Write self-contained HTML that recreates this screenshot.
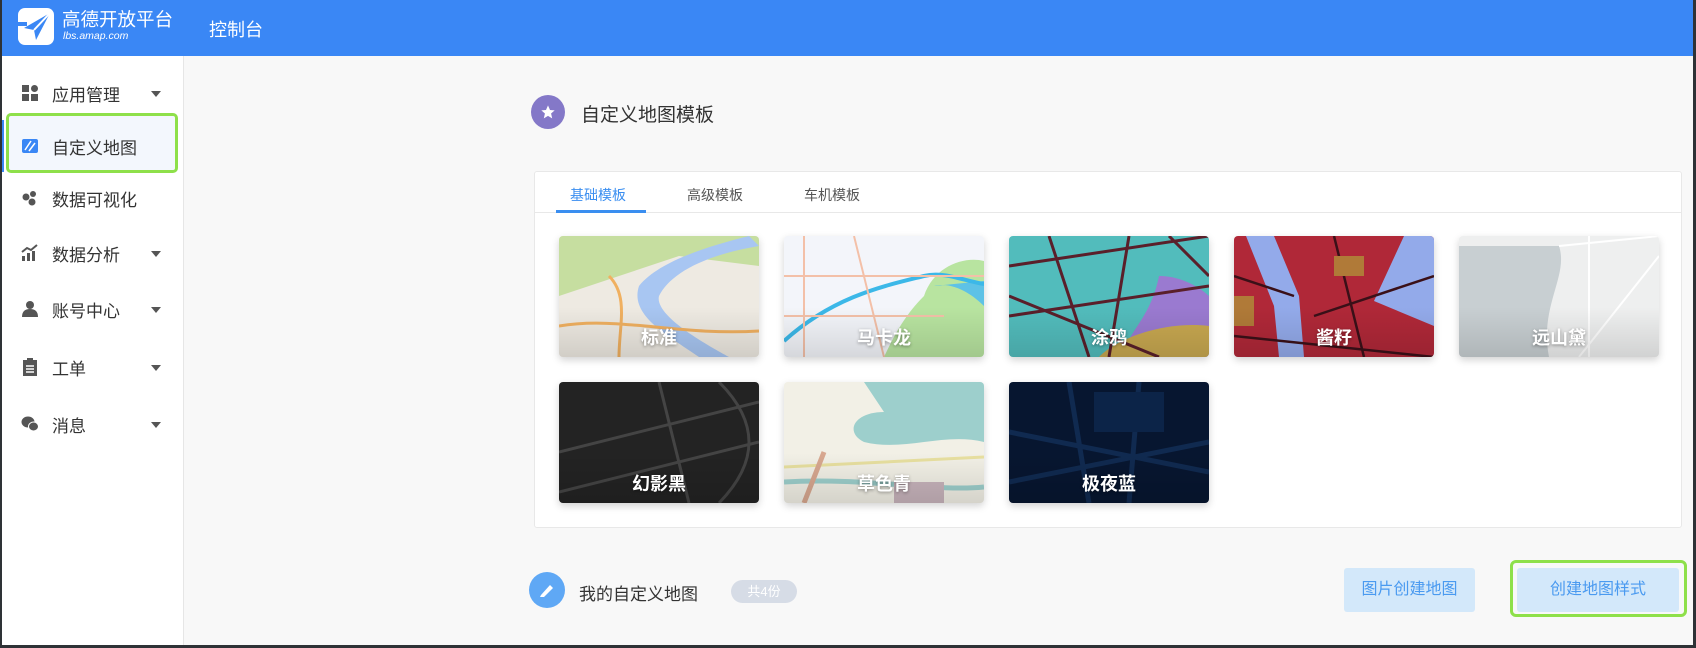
<!DOCTYPE html>
<html><head><meta charset="utf-8"><style>
*{margin:0;padding:0;box-sizing:border-box}
body{width:1696px;height:648px;overflow:hidden;background:#f8f8f8;font-family:"Liberation Sans","Noto Sans CJK SC",sans-serif;position:relative}
.hdr{position:absolute;left:0;top:0;width:1696px;height:56px;background:#3a87f5}
.side{position:absolute;left:0;top:56px;width:184px;height:592px;background:#fff;border-right:1px solid #e6e6e6}
.mi{position:absolute;left:0;width:184px;height:20px;font-size:17px;color:#333;}
.mi .t{position:absolute;left:52px;top:-2px}
.mi .ic{position:absolute;left:21px;top:1px;width:18px;height:18px}
.mi .ar{position:absolute;left:151px;top:8px;width:0;height:0;border-left:5px solid transparent;border-right:5px solid transparent;border-top:6px solid #555}
.abs{position:absolute}
.panel{position:absolute;left:534px;top:171px;width:1148px;height:357px;background:#fff;border:1px solid #e8e8e8;border-radius:3px}
.tab{position:absolute;top:13px;font-size:14px;color:#555}
.card{position:absolute;width:200px;height:121px;border-radius:4px;overflow:hidden;box-shadow:0 3px 8px rgba(0,0,0,.18)}
.card svg{position:absolute;left:0;top:0}
.card .lb{position:absolute;left:0;right:0;bottom:7px;text-align:center;color:#fff;font-size:18px;font-weight:bold;text-shadow:0 1px 3px rgba(0,0,0,.4);z-index:2}
.card:after{content:"";position:absolute;left:0;right:0;bottom:0;height:50px;background:linear-gradient(rgba(0,0,0,0),rgba(0,0,0,.12))}
.btn{position:absolute;height:44px;background:#d3e8fa;color:#4a9af0;font-size:16px;text-align:center;line-height:44px;border-radius:3px}
</style></head><body>
<div class="hdr">
  <div class="abs" style="left:18px;top:8px;width:36px;height:37px;background:#fff;border-radius:7px"></div>
  <svg class="abs" style="left:18px;top:8px" width="36" height="37"><path d="M6 20 L32 5 L18 32 L16 22 Z" fill="#3a87f5"/><path d="M16 22 L32 5" stroke="#fff" stroke-width="2"/><rect x="0" y="14" width="9" height="4" fill="#3a87f5"/></svg>
  <div class="abs" style="left:62px;top:9px;color:#fff;font-size:18.5px;line-height:21px">高德开放平台</div>
  <div class="abs" style="left:63px;top:30px;color:#fff;font-size:10.5px;font-style:italic">lbs.amap.com</div>
  <div class="abs" style="left:209px;top:16px;color:#fff;font-size:18px">控制台</div>
</div>
<div class="side">
  <div class="abs" style="left:0;top:64px;width:4px;height:52px;background:#3a87f5"></div>
  <div class="abs" style="left:6px;top:57px;width:172px;height:60px;background:#f3f7fd;border:3px solid #8ee04a;border-radius:5px"></div>
</div>
<div class="mi" style="top:83px"><svg class="ic" viewBox="0 0 18 18"><rect x="1" y="1" width="7" height="7" fill="#555"/><rect x="1" y="10" width="7" height="7" fill="#555"/><rect x="10" y="10" width="7" height="7" fill="#555"/><circle cx="13.5" cy="4.5" r="3.5" fill="#555"/></svg><span class="t">应用管理</span><span class="ar"></span></div>
<div class="mi" style="top:136px"><svg class="ic" viewBox="0 0 18 18"><rect x="1" y="2" width="16" height="14" rx="2" fill="#3a87f5"/><path d="M4 13 L10 4 M8 14 L14 6" stroke="#fff" stroke-width="1.5"/></svg><span class="t">自定义地图</span></div>
<div class="mi" style="top:188px"><svg class="ic" viewBox="0 0 18 18"><circle cx="5" cy="8" r="3.5" fill="#555"/><circle cx="12" cy="5" r="3" fill="#555"/><circle cx="11" cy="13" r="3.5" fill="#555"/></svg><span class="t">数据可视化</span></div>
<div class="mi" style="top:243px"><svg class="ic" viewBox="0 0 18 18"><rect x="1" y="12" width="3" height="5" fill="#555"/><rect x="6" y="9" width="3" height="8" fill="#555"/><rect x="11" y="7" width="3" height="10" fill="#555"/><path d="M1 8 L6 4 L10 6 L16 1" stroke="#555" stroke-width="2" fill="none"/></svg><span class="t">数据分析</span><span class="ar"></span></div>
<div class="mi" style="top:299px"><svg class="ic" viewBox="0 0 18 18"><circle cx="9" cy="5" r="4" fill="#555"/><path d="M1 17 Q1 9 9 9 Q17 9 17 17 Z" fill="#555"/></svg><span class="t">账号中心</span><span class="ar"></span></div>
<div class="mi" style="top:357px"><svg class="ic" viewBox="0 0 18 18"><rect x="2" y="2" width="14" height="16" fill="#555"/><rect x="6" y="0" width="6" height="3" fill="#555"/><path d="M5 8h8M5 11h8M5 14h8" stroke="#fff" stroke-width="1.5"/></svg><span class="t">工单</span><span class="ar"></span></div>
<div class="mi" style="top:414px"><svg class="ic" viewBox="0 0 18 18"><ellipse cx="7" cy="7" rx="6.5" ry="5.5" fill="#555"/><ellipse cx="12.5" cy="11.5" rx="5" ry="4.5" fill="#555" stroke="#fff" stroke-width="1"/></svg><span class="t">消息</span><span class="ar"></span></div>

<div class="abs" style="left:531px;top:95px;width:34px;height:34px;border-radius:50%;background:#8478c8"></div>
<svg class="abs" style="left:540px;top:104px" width="16" height="16" viewBox="0 0 24 24"><path d="M12 2l3 7 7 .6-5.4 4.7 1.7 7.2L12 17.8 5.7 21.5l1.7-7.2L2 9.6 9 9z" fill="#fff"/></svg>
<div class="abs" style="left:581px;top:100px;font-size:19px;color:#333">自定义地图模板</div>

<div class="panel">
  <div class="abs" style="left:0;top:40px;width:100%;height:1px;background:#e8e8e8"></div>
  <div class="tab" style="left:35px;color:#3a8ef0">基础模板</div>
  <div class="tab" style="left:152px">高级模板</div>
  <div class="tab" style="left:269px">车机模板</div>
  <div class="abs" style="left:21px;top:38px;width:90px;height:3px;background:#3a8ef0"></div>
</div>

<div class="card" style="left:559px;top:236px;background:#eeeae2"><svg width="200" height="121"><path d="M0 0H200V30L120 20 60 40 0 60Z" fill="#c6dea0"/><path d="M200 10 C140 20 110 40 100 60 C95 80 150 110 170 121 H140 C110 100 70 80 80 50 C100 25 150 10 190 0Z" fill="#a8c6f2"/><path d="M0 90 C60 80 120 100 200 95 M60 121 C60 90 70 60 50 40" stroke="#f0b060" stroke-width="3" fill="none"/></svg><div class="lb">标准</div></div>
<div class="card" style="left:784px;top:236px;background:#f3f5fa"><svg width="200" height="121"><path d="M140 60 C150 30 180 20 200 25 V121 H100 C110 100 120 80 140 60Z" fill="#b8e4a0"/><path d="M150 50 C170 45 190 60 200 70 V45Z" fill="#5ec2e6"/><path d="M0 105 C50 60 100 50 140 40 C160 35 180 45 200 48" stroke="#3cb8e8" stroke-width="4" fill="none"/><path d="M20 0V121 M70 0 L100 121 M0 40H200 M0 80H160" stroke="#f3c0a8" stroke-width="2" fill="none"/></svg><div class="lb">马卡龙</div></div>
<div class="card" style="left:1009px;top:236px;background:#52bcbc"><svg width="200" height="121"><path d="M150 40 C180 40 200 60 200 60 V121 H120 C110 100 140 90 150 40Z" fill="#9a7ad0"/><path d="M90 121 C110 100 160 85 200 90 V121Z" fill="#c8a850"/><path d="M0 30 L200 0 M0 80 L200 50 M40 0 L80 121 M120 0 L100 121 M0 60 L150 121 M160 0 L200 40" stroke="#5a1f2a" stroke-width="3" fill="none"/></svg><div class="lb">涂鸦</div></div>
<div class="card" style="left:1234px;top:236px;background:#b02838"><svg width="200" height="121"><path d="M12 0H40 L65 60 L70 121 H45 L40 70Z" fill="#93aaea"/><path d="M170 0H200V90 L140 65Z" fill="#93aaea"/><path d="M0 40L60 60 M80 80 L200 40 M100 0 L130 121 M0 100 L200 121" stroke="#3a1018" stroke-width="2.5" fill="none"/><rect x="100" y="20" width="30" height="20" fill="#b07a38"/><rect x="0" y="60" width="20" height="30" fill="#b07a38"/></svg><div class="lb">酱籽</div></div>
<div class="card" style="left:1459px;top:236px;background:#eeefef"><svg width="200" height="121"><path d="M0 10 H100 C110 40 80 70 90 121 H0Z" fill="#c8cfd2"/><path d="M100 10 L200 0 M130 0 L130 121 M120 121 L200 20" stroke="#fff" stroke-width="2" fill="none"/></svg><div class="lb">远山黛</div></div>
<div class="card" style="left:559px;top:382px;background:#232323"><svg width="200" height="121"><path d="M0 70 L200 20 M0 110 L200 60 M100 0 L130 121 M160 0 C200 40 200 80 160 121" stroke="#444" stroke-width="3" fill="none"/></svg><div class="lb">幻影黑</div></div>
<div class="card" style="left:784px;top:382px;background:#f2f0e6"><svg width="200" height="121"><path d="M80 0H200V60 C160 50 120 70 80 60 C60 50 70 30 100 30Z" fill="#9dcfcc"/><path d="M0 100 C80 95 150 110 200 105" stroke="#9dcfcc" stroke-width="5" fill="none"/><path d="M0 85 L200 75" stroke="#e8e0a0" stroke-width="3"/><path d="M20 121 L40 70" stroke="#d8a890" stroke-width="5"/><path d="M110 100 H160 V121 H110Z" fill="#c8b4bc"/></svg><div class="lb">草色青</div></div>
<div class="card" style="left:1009px;top:382px;background:#071630"><svg width="200" height="121"><path d="M0 50 L200 90 M60 0 L80 121 M130 0 L120 121 M0 100 L200 60" stroke="#102a50" stroke-width="5" fill="none"/><rect x="85" y="10" width="70" height="40" fill="#0c2448"/></svg><div class="lb">极夜蓝</div></div>

<div class="abs" style="left:529px;top:572px;width:36px;height:36px;border-radius:50%;background:#5fa8f5"></div>
<svg class="abs" style="left:538px;top:581px" width="18" height="18" viewBox="0 0 18 18"><path d="M3 14 L12 4 L15 7 L6 16 L2 16Z" fill="#fff"/></svg>
<div class="abs" style="left:579px;top:580px;font-size:17px;color:#333">我的自定义地图</div>
<div class="abs" style="left:731px;top:580px;width:66px;height:23px;border-radius:12px;background:#d6dce6;color:#fff;font-size:13px;text-align:center;line-height:23px">共4份</div>

<div class="btn" style="left:1344px;top:568px;width:131px">图片创建地图</div>
<div class="abs" style="left:1510px;top:560px;width:177px;height:57px;border:3px solid #8ee04a;border-radius:6px"></div>
<div class="btn" style="left:1517px;top:568px;width:162px">创建地图样式</div>

<div class="abs" style="left:0;top:0;width:2px;height:648px;background:#2e3236"></div>
<div class="abs" style="left:1693px;top:0;width:3px;height:648px;background:#2e3236"></div>
<div class="abs" style="left:0;top:645px;width:1696px;height:3px;background:#2e3236"></div>
</body></html>
